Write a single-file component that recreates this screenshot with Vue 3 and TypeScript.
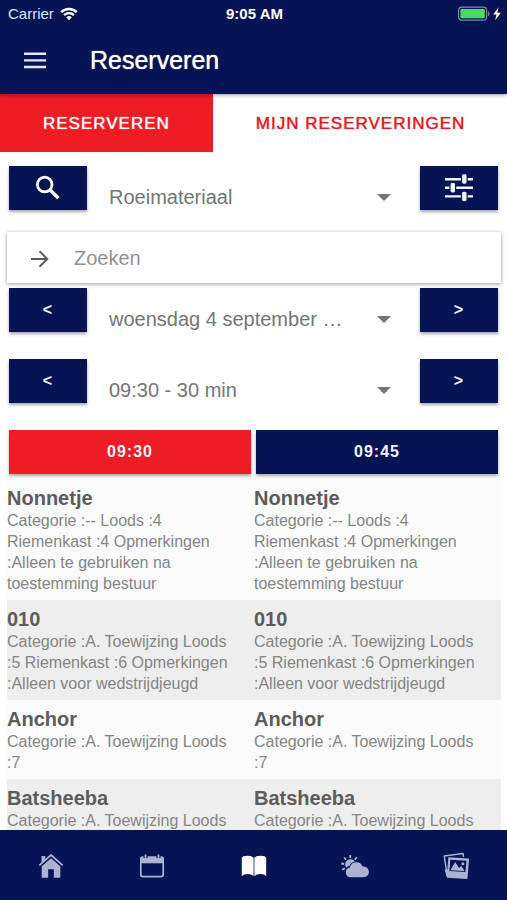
<script setup lang="ts">
import { ref } from 'vue'

interface Boat {
  name: string
  info: string
}

const boats: Boat[] = [
  { name: 'Nonnetje', info: 'Categorie :-- Loods :4 Riemenkast :4 Opmerkingen :Alleen te gebruiken na toestemming bestuur' },
  { name: '010', info: 'Categorie :A. Toewijzing Loods :5 Riemenkast :6 Opmerkingen :Alleen voor wedstrijdjeugd' },
  { name: 'Anchor', info: 'Categorie :A. Toewijzing Loods :7' },
  { name: 'Batsheeba', info: 'Categorie :A. Toewijzing Loods' },
]

const times = ['09:30', '09:45']
const activeTime = ref('09:30')
const query = ref('')
</script>

<template>
  <div class="app">
    <header class="top">
      <div class="status">
        <div class="carrier">
          <span>Carrier</span>
          <svg width="18" height="14" viewBox="0 0 18 14" fill="none" stroke="#fff" stroke-width="2.4">
            <path d="M1.2 5.2a11 11 0 0 1 15.6 0" />
            <path d="M4.1 8.1a7 7 0 0 1 9.8 0" />
            <path d="M9 13.2 6.2 10.3a4 4 0 0 1 5.6 0Z" fill="#fff" stroke="none" />
          </svg>
        </div>
        <div class="clock">9:05 AM</div>
        <div class="battery">
          <svg width="43" height="16" viewBox="0 0 43 16">
            <rect x=".6" y="1.1" width="28" height="13" rx="3.2" fill="none" stroke="#8089a8" stroke-width="1.2" />
            <rect x="2.4" y="2.9" width="24.4" height="9.4" rx="1.4" fill="#4cd964" />
            <path d="M30 5.2c1.900.5 1.900 4.300 0 4.900z" fill="#8089a8" />
            <path d="M40.600 1.300 35.200 8.600h3.300l-1.400 5.700 5.700-7.500h-3.500z" fill="#fff" />
          </svg>
        </div>
      </div>
      <div class="nav">
        <button class="menu" type="button" aria-label="Menu">
          <svg width="24" height="18" viewBox="0 0 24 18" fill="#e4e9ff">
            <path d="M1 .6h22V3H1zM1 7.200h22v2.400H1zM1 13.800h22v2.400H1z" />
          </svg>
        </button>
        <h1>Reserveren</h1>
      </div>
    </header>

    <nav class="tabs">
      <a href="#reserveren" class="tab active">RESERVEREN</a>
      <a href="#mijn" class="tab">MIJN RESERVERINGEN</a>
    </nav>

    <main class="content">
      <div class="row">
        <button class="btn" type="button" aria-label="Zoeken">
          <svg width="26" height="26" viewBox="0 0 26 26" fill="none" stroke="#fff" stroke-width="2.800">
            <circle cx="9.700" cy="9.500" r="7.300" />
            <path d="m15.200 15 8.200 8.200" stroke-width="3.500" />
          </svg>
        </button>
        <div class="field">
          <select aria-label="Materiaal"><option>Roeimateriaal</option></select>
          <svg class="caret" width="14" height="7" viewBox="0 0 14 7"><path d="M0 0h14L7 7z" fill="#757575" /></svg>
        </div>
        <button class="btn" type="button" aria-label="Filters">
          <svg width="28" height="28" viewBox="0 0 28 28" fill="#f1f5ff">
            <path d="M0 4h28v2.400H0zM0 12.600h28V15H0zM0 21.200h28v2.400H0z" />
            <g stroke="#061355" stroke-width="1.200">
              <rect x="16.500" y="-.3" width="5.600" height="10.600" rx="2" />
              <rect x="5" y="8.500" width="5.600" height="10.600" rx="2" />
              <rect x="16.500" y="17.200" width="5.600" height="10.600" rx="2" />
            </g>
          </svg>
        </button>
      </div>

      <div class="search">
        <svg width="18" height="18" viewBox="0 0 18 18" fill="none" stroke="#5b5b5b" stroke-width="2">
          <path d="M0 9h16M8.500 1.200 16.300 9l-7.800 7.800" />
        </svg>
        <input v-model="query" type="text" placeholder="Zoeken" aria-label="Zoeken" />
      </div>

      <div class="row">
        <button class="btn" type="button">&lt;</button>
        <div class="field">
          <select aria-label="Datum"><option>woensdag 4 september …</option></select>
          <svg class="caret" width="14" height="7" viewBox="0 0 14 7"><path d="M0 0h14L7 7z" fill="#757575" /></svg>
        </div>
        <button class="btn" type="button">&gt;</button>
      </div>

      <div class="row">
        <button class="btn" type="button">&lt;</button>
        <div class="field">
          <select aria-label="Tijd"><option>09:30 - 30 min</option></select>
          <svg class="caret" width="14" height="7" viewBox="0 0 14 7"><path d="M0 0h14L7 7z" fill="#757575" /></svg>
        </div>
        <button class="btn" type="button">&gt;</button>
      </div>

      <div class="times">
        <button
          v-for="t in times"
          :key="t"
          class="btn time"
          :class="{ active: t === activeTime }"
          type="button"
          @click="activeTime = t"
        >{{ t }}</button>
      </div>

      <div class="list">
        <div v-for="b in boats" :key="b.name" class="pair">
          <article v-for="t in times" :key="t" class="boat">
            <h2>{{ b.name }}</h2>
            <p>{{ b.info }}</p>
          </article>
        </div>
      </div>
    </main>

    <footer class="bottom">
      <a href="#home" aria-label="Home">
        <svg width="26" height="26" viewBox="0 0 26 26" fill="#abb3d1">
          <path d="M3.500 3h3.800v4.200L3.500 10.500z" />
          <path d="M13 4.900 22.300 13v11.800h-6.500v-8.600h-5.600v8.600H3.700V13z" />
          <path d="M1.300 12.300 13 2l11.700 10.300" fill="none" stroke="#abb3d1" stroke-width="1.700" />
          <path d="M2.600 13.800 13 4.700l10.400 9.100" fill="none" stroke="#061355" stroke-width=".8" />
        </svg>
      </a>
      <a href="#agenda" aria-label="Agenda">
        <svg width="26" height="26" viewBox="0 0 26 26">
          <rect x="1.800" y="4" width="22.400" height="19.600" rx="2" fill="none" stroke="#abb3d1" stroke-width="1.700" />
          <path d="M2 4h22v6.300H2z" fill="#abb3d1" />
          <path d="M6.500 1v4M19.500 1v4" stroke="#061355" stroke-width="4" />
          <path d="M6.500 1.500v3.300M19.500 1.500v3.300" stroke="#abb3d1" stroke-width="1.800" />
        </svg>
      </a>
      <a href="#reserveren" aria-label="Reserveren">
        <svg width="26" height="26" viewBox="0 0 26 26" fill="#fff">
          <path d="M.8 4.800Q1.300 2.700 6.500 2.700q5 0 5.700 2.100v18.500q-1.500-2.200-5.700-2.200-4 0-5.700 2.200z" />
          <path d="M13.800 4.800q.7-2.100 5.700-2.100 5.200 0 5.700 2.100v18.500q-1.700-2.200-5.700-2.200-4.200 0-5.700 2.200z" />
          <path d="M12 4.500h2v18h-2z" fill="#9ca4c6" />
        </svg>
      </a>
      <a href="#weer" aria-label="Weer">
        <svg width="30" height="26" viewBox="0 0 30 26" fill="#abb3d1">
          <g stroke="#abb3d1" stroke-width="1.800">
            <path d="M10.300 2v3M4.200 4.500l1.900 2.200M16.700 4.300l-1.800 2.400M1.300 10.500l2.900.5M2.200 16.800l2.700-1.500" />
          </g>
          <path d="M5.900 14.200a5 5 0 1 1 9-5.500q-4.400.6-5.600 4.400-1.900.3-3.100 1.600z" />
          <path d="M10.500 24.300a4.900 4.900 0 0 1-.7-9.700 6.600 6.600 0 0 1 12.700-1 5.400 5.400 0 1 1 1 10.700z" />
        </svg>
      </a>
      <a href="#fotos" aria-label="Foto's">
        <svg width="28" height="28" viewBox="0 0 28 28">
          <path d="m5 22-2.800-18L21 1.600l.6 3.200" fill="none" stroke="#abb3d1" stroke-width="1.500" stroke-linejoin="round" />
          <path d="m2.700 17.500 3.800.5v7l-2-.6z" fill="#abb3d1" />
          <path d="m7 5.900 19.300 1.300-1.600 19L5.600 24.900z" fill="#abb3d1" stroke="#abb3d1" stroke-width="1.500" stroke-linejoin="round" />
          <path d="m8.300 7.800 16.100 1-1 11.200-16-.9z" fill="#061355" />
          <path d="m8.500 18.300 4.600-8.200 4 6 2.300-2 3.200 5z" fill="#abb3d1" />
          <circle cx="20.900" cy="11.700" r="1.500" fill="#abb3d1" />
        </svg>
      </a>
    </footer>
  </div>
</template>

<style>
body {
  margin: 0;
  background: #fff;
}
</style>

<style scoped>
* {
  box-sizing: border-box;
}
.app {
  height: 100vh;
  display: flex;
  flex-direction: column;
  overflow: hidden;
  background: #fff;
  font-family: "Liberation Sans", Arial, sans-serif;
  color: #757575;
}
button,
input,
select {
  font: inherit;
  border: 0;
  padding: 0;
  margin: 0;
  background: none;
  border-radius: 0;
  outline: 0;
}
svg {
  display: block;
  flex: none;
}
.top {
  flex: none;
  position: relative;
  background: #061355;
  color: #fff;
  box-shadow: 0 1px 4px rgba(0, 0, 0, 0.4);
}
.status {
  display: grid;
  grid-template-columns: 1fr auto 1fr;
  align-items: center;
  height: 27px;
  padding: 0 6px 0 8px;
  font-size: 15px;
}
.carrier {
  display: flex;
  align-items: center;
  gap: 6px;
  color: #dfe4f5;
}
.clock {
  font-weight: bold;
}
.battery {
  justify-self: end;
}
.nav {
  display: flex;
  align-items: center;
  gap: 43px;
  height: 67px;
  padding: 0 23px;
}
h1 {
  margin: 0;
  font-size: 25px;
  font-weight: normal;
  text-shadow: 0 0 1px currentColor;
}
.tabs {
  flex: none;
  display: flex;
  height: 58px;
}
.tab {
  flex: 1 0 auto;
  display: flex;
  align-items: center;
  justify-content: center;
  padding: 2px 43px 0;
  color: #e31c24;
  font-size: 17px;
  letter-spacing: 1px;
  text-decoration: none;
  text-shadow: 0 0 1px currentColor;
}
.tab.active {
  flex: none;
  background: #ee1c25;
  color: #fff;
}
.content {
  flex: 1;
  min-height: 0;
  overflow: hidden;
  padding: 14px 6px 0 7px;
}
.row {
  display: flex;
  height: 44px;
  margin: 0 3px 27px 2px;
}
.btn {
  flex: none;
  display: flex;
  align-items: center;
  justify-content: center;
  width: 78px;
  height: 44px;
  background: #061355;
  color: #f1f5ff;
  font-size: 16px;
  font-weight: bold;
  letter-spacing: 1px;
  box-shadow: 0 2px 3px rgba(0, 0, 0, 0.35);
}
.field {
  flex: 1;
  min-width: 0;
  display: grid;
  align-items: center;
  padding: 18px 29px 0 22px;
}
.field > * {
  grid-area: 1 / 1;
}
.field select {
  width: 100%;
  height: 26px;
  appearance: none;
  color: #757575;
  font-size: 20px;
  text-overflow: ellipsis;
}
.caret {
  justify-self: end;
  pointer-events: none;
}
.search {
  display: flex;
  align-items: center;
  gap: 25px;
  height: 51px;
  margin: -5px 0 5px;
  padding: 2px 24px 0;
  background: #fff;
  box-shadow: 0 1px 4px rgba(0, 0, 0, 0.4);
}
.search input {
  flex: 1;
  min-width: 0;
  height: 40px;
  font-size: 20px;
  color: #616161;
}
.search input::placeholder {
  color: #929292;
  opacity: 1;
}
.times {
  display: flex;
  gap: 5px;
  margin: 0 3px 5px 2px;
}
.time {
  flex: 1;
}
.time.active {
  background: #ee1c25;
}
.pair {
  display: grid;
  grid-template-columns: 1fr 1fr;
  background: #fafafa;
}
.pair:nth-child(even) {
  background: #eee;
}
.boat {
  padding: 7px 16px 6px 0;
}
h2 {
  margin: 0;
  color: #5c5c5c;
  font-size: 20px;
  line-height: 24px;
}
p {
  margin: 0;
  color: #858585;
  font-size: 16px;
  line-height: 21px;
}
.bottom {
  flex: none;
  position: relative;
  display: flex;
  height: 70px;
  padding-top: 2px;
  background: #061355;
}
.bottom a {
  flex: 1;
  display: flex;
  align-items: center;
  justify-content: center;
}
</style>
